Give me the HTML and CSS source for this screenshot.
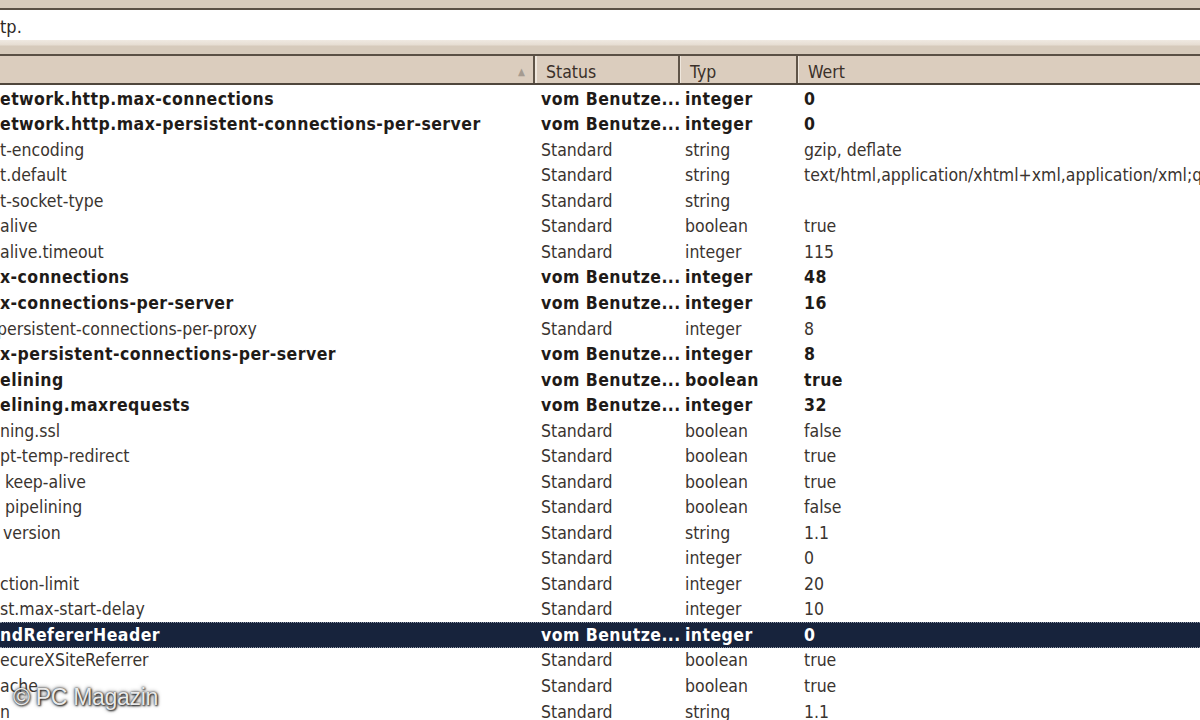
FILE: index.html
```html
<!DOCTYPE html>
<html lang="de">
<head>
<meta charset="utf-8">
<title>about:config</title>
<link rel="stylesheet" href="styles.css">
</head>
<body>
<div class="page">
  <div class="topband"></div>
  <div class="search"><span class="search-text">tp.</span></div>
  <div class="gapband"></div>
  <div class="thead">
    <div class="th c1"><span class="sort">&#9650;</span></div>
    <div class="th c2">Status</div>
    <div class="th c3">Typ</div>
    <div class="th c4">Wert</div>
  </div>
  <div class="tbody">
    <div class="row b"><div class="c1">etwork.http.max-connections</div><div class="c2">vom Benutze...</div><div class="c3">integer</div><div class="c4">0</div></div>
    <div class="row b"><div class="c1">etwork.http.max-persistent-connections-per-server</div><div class="c2">vom Benutze...</div><div class="c3">integer</div><div class="c4">0</div></div>
    <div class="row"><div class="c1">t-encoding</div><div class="c2">Standard</div><div class="c3">string</div><div class="c4">gzip, deflate</div></div>
    <div class="row"><div class="c1">t.default</div><div class="c2">Standard</div><div class="c3">string</div><div class="c4">text/html,application/xhtml+xml,application/xml;q=0.9,*/*;q=0.8</div></div>
    <div class="row"><div class="c1">t-socket-type</div><div class="c2">Standard</div><div class="c3">string</div><div class="c4"></div></div>
    <div class="row"><div class="c1">alive</div><div class="c2">Standard</div><div class="c3">boolean</div><div class="c4">true</div></div>
    <div class="row"><div class="c1">alive.timeout</div><div class="c2">Standard</div><div class="c3">integer</div><div class="c4">115</div></div>
    <div class="row b"><div class="c1">x-connections</div><div class="c2">vom Benutze...</div><div class="c3">integer</div><div class="c4">48</div></div>
    <div class="row b"><div class="c1">x-connections-per-server</div><div class="c2">vom Benutze...</div><div class="c3">integer</div><div class="c4">16</div></div>
    <div class="row"><div class="c1 cut">persistent-connections-per-proxy</div><div class="c2">Standard</div><div class="c3">integer</div><div class="c4">8</div></div>
    <div class="row b"><div class="c1">x-persistent-connections-per-server</div><div class="c2">vom Benutze...</div><div class="c3">integer</div><div class="c4">8</div></div>
    <div class="row b"><div class="c1">elining</div><div class="c2">vom Benutze...</div><div class="c3">boolean</div><div class="c4">true</div></div>
    <div class="row b"><div class="c1">elining.maxrequests</div><div class="c2">vom Benutze...</div><div class="c3">integer</div><div class="c4">32</div></div>
    <div class="row"><div class="c1">ning.ssl</div><div class="c2">Standard</div><div class="c3">boolean</div><div class="c4">false</div></div>
    <div class="row"><div class="c1">pt-temp-redirect</div><div class="c2">Standard</div><div class="c3">boolean</div><div class="c4">true</div></div>
    <div class="row"><div class="c1 ind">keep-alive</div><div class="c2">Standard</div><div class="c3">boolean</div><div class="c4">true</div></div>
    <div class="row"><div class="c1 ind">pipelining</div><div class="c2">Standard</div><div class="c3">boolean</div><div class="c4">false</div></div>
    <div class="row"><div class="c1 ind-s">version</div><div class="c2">Standard</div><div class="c3">string</div><div class="c4">1.1</div></div>
    <div class="row"><div class="c1"></div><div class="c2">Standard</div><div class="c3">integer</div><div class="c4">0</div></div>
    <div class="row"><div class="c1">ction-limit</div><div class="c2">Standard</div><div class="c3">integer</div><div class="c4">20</div></div>
    <div class="row"><div class="c1">st.max-start-delay</div><div class="c2">Standard</div><div class="c3">integer</div><div class="c4">10</div></div>
    <div class="row b sel"><div class="c1">ndRefererHeader</div><div class="c2">vom Benutze...</div><div class="c3">integer</div><div class="c4">0</div></div>
    <div class="row"><div class="c1">ecureXSiteReferrer</div><div class="c2">Standard</div><div class="c3">boolean</div><div class="c4">true</div></div>
    <div class="row"><div class="c1">ache</div><div class="c2">Standard</div><div class="c3">boolean</div><div class="c4">true</div></div>
    <div class="row"><div class="c1">n</div><div class="c2">Standard</div><div class="c3">string</div><div class="c4">1.1</div></div>
  </div>
  <div class="watermark">&copy; PC Magazin</div>
</div>
</body>
</html>
```

FILE: styles.css
```css
html, body {
  margin: 0;
  padding: 0;
  background: #ffffff;
}

.page {
  position: relative;
  width: 1200px;
  height: 720px;
  overflow: hidden;
  font-family: "DejaVu Sans Condensed", "DejaVu Sans", sans-serif;
  font-stretch: condensed;
  font-size: 17.5px;
  color: #3a342f;
}

.topband {
  height: 8px;
  background: #d7cbbc;
  border-bottom: 2px solid #5a5045;
}

.search {
  height: 30px;
  background: #ffffff;
  display: flex;
  align-items: center;
}

.search-text {
  font-size: 18px;
  color: #2f2a26;
  margin-top: 2px;
}

.gapband {
  height: 14px;
  background: linear-gradient(#efe9e1 0, #e6ddd2 5px, #d6cabb 6px, #d6cabb 100%);
  border-bottom: 2px solid #5a5045;
}

.thead {
  display: flex;
  height: 27px;
  background: #dbcdbe;
  border-bottom: 2px solid #4f463c;
}

.th {
  display: flex;
  align-items: center;
  padding-top: 4px;
  color: #3a3029;
  font-size: 17.5px;
  box-sizing: border-box;
}

.thead .c1 {
  width: 535px;
  justify-content: flex-end;
  padding-right: 8px;
  border-right: 2px solid #5f5448;
}

.thead .c2 {
  width: 145px;
  padding-left: 9px;
  border-left: 2px solid #efe7dd;
  border-right: 2px solid #5f5448;
}

.thead .c3 {
  width: 118px;
  padding-left: 9px;
  border-left: 1px solid #efe7dd;
  border-right: 2px solid #5f5448;
}

.thead .c4 {
  flex: 1;
  padding-left: 9px;
  border-left: 1px solid #efe7dd;
}

.sort {
  font-size: 10px;
  color: #a59b90;
}

.tbody {
  padding-top: 1px;
}

.row {
  display: flex;
  height: 25.54px;
  align-items: center;
  white-space: nowrap;
}

.row > div {
  overflow: hidden;
  box-sizing: border-box;
}

.row .c1 {
  width: 537px;
}

.row .c2 {
  width: 143px;
  padding-left: 4px;
  overflow: visible;
}

.row .c3 {
  width: 119px;
  padding-left: 5px;
}

.row .c4 {
  flex: 1;
  padding-left: 5px;
}

.row .ind {
  padding-left: 5px;
}

.row .ind-s {
  padding-left: 3px;
}

.row .cut {
  text-indent: -3px;
}

.row.b {
  font-weight: bold;
  color: #1f1b18;
  letter-spacing: 0.45px;
}

.row.sel {
  background: #17233c;
  color: #ffffff;
  border-top: 1px dotted #8f97a6;
  border-bottom: 1px dotted #8f97a6;
  box-sizing: border-box;
}

.watermark {
  position: absolute;
  left: 13px;
  top: 684px;
  font-family: "Liberation Sans", Arial, sans-serif;
  font-size: 23px;
  color: #e9e9e9;
  text-shadow: 0 0 2px #333333, 1px 1px 2px #222222, 0 0 4px #555555;
  letter-spacing: -0.3px;
}
```
